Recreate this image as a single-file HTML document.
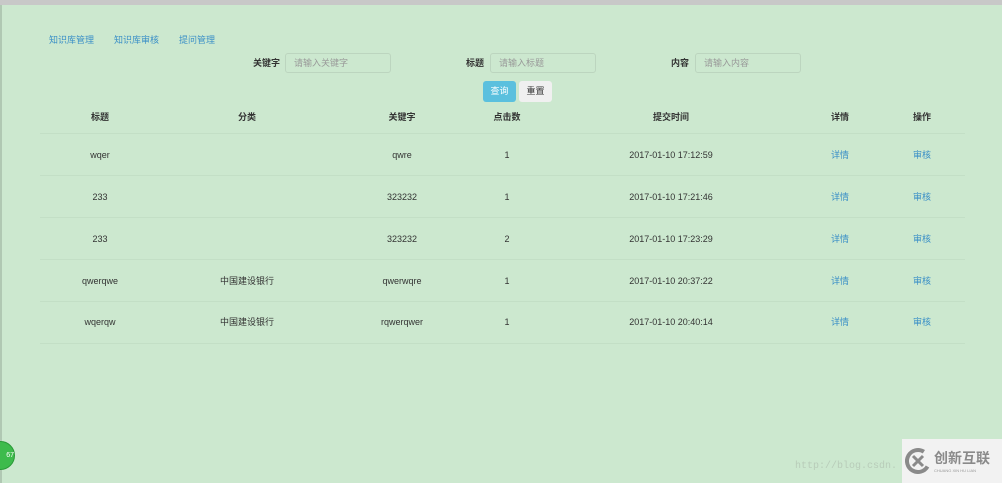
<!DOCTYPE html>
<html><head><meta charset="utf-8"><style>
body{margin:0;width:1002px;height:483px;background:#cce8cf;position:relative;overflow:hidden;font-family:"Liberation Sans","Noto Sans CJK SC",sans-serif;font-size:9px;color:#333;line-height:12px}
.a{position:absolute;white-space:nowrap}
.link{color:#3a8fc7}
.inp{position:absolute;height:20px;border:1px solid #bcd5bf;border-radius:3px;background:#cce8cf;color:#999;font-size:9px;line-height:18px;padding-left:8px;box-sizing:border-box}
.c{position:absolute;transform:translateX(-50%);white-space:nowrap;height:12px}
.line{position:absolute;left:40px;width:925px;height:1px;background:#c3dfc6}
</style></head><body>
<div class="a" style="left:0;top:0;width:1002px;height:5px;background:#c8c8c8"></div>
<div class="a" style="left:0;top:5px;width:2px;height:478px;background:#b0c8b3"></div>
<div class="a link" style="left:49px;top:34px">知识库管理</div>
<div class="a link" style="left:114px;top:34px">知识库审核</div>
<div class="a link" style="left:179px;top:34px">提问管理</div>
<div class="a" style="left:253px;top:57px;font-weight:bold">关键字</div>
<div class="inp" style="left:285px;top:53px;width:106px">请输入关键字</div>
<div class="a" style="left:466px;top:57px;font-weight:bold">标题</div>
<div class="inp" style="left:490px;top:53px;width:106px">请输入标题</div>
<div class="a" style="left:671px;top:57px;font-weight:bold">内容</div>
<div class="inp" style="left:695px;top:53px;width:106px">请输入内容</div>
<div class="a" style="left:483px;top:81px;width:33px;height:21px;background:#5bc0de;border-radius:3px;color:#fff;text-align:center;line-height:21px">查询</div>
<div class="a" style="left:519px;top:81px;width:33px;height:21px;background:#f0f0f0;border-radius:3px;color:#333;text-align:center;line-height:21px">重置</div>
<div style="font-weight:bold">
<div class="c" style="left:100px;top:111px">标题</div>
<div class="c" style="left:247px;top:111px">分类</div>
<div class="c" style="left:402px;top:111px">关键字</div>
<div class="c" style="left:507px;top:111px">点击数</div>
<div class="c" style="left:671px;top:111px">提交时间</div>
<div class="c" style="left:840px;top:111px">详情</div>
<div class="c" style="left:922px;top:111px">操作</div>
</div>
<div class="line" style="top:133px"></div>
<div class="line" style="top:175px"></div>
<div class="line" style="top:217px"></div>
<div class="line" style="top:259px"></div>
<div class="line" style="top:301px"></div>
<div class="line" style="top:343px"></div>

<div class="c" style="left:100px;top:149px">wqer</div><div class="c" style="left:402px;top:149px">qwre</div><div class="c" style="left:507px;top:149px">1</div><div class="c" style="left:671px;top:149px">2017-01-10 17:12:59</div><div class="c link" style="left:840px;top:149px">详情</div><div class="c link" style="left:922px;top:149px">审核</div>

<div class="c" style="left:100px;top:191px">233</div><div class="c" style="left:402px;top:191px">323232</div><div class="c" style="left:507px;top:191px">1</div><div class="c" style="left:671px;top:191px">2017-01-10 17:21:46</div><div class="c link" style="left:840px;top:191px">详情</div><div class="c link" style="left:922px;top:191px">审核</div>

<div class="c" style="left:100px;top:233px">233</div><div class="c" style="left:402px;top:233px">323232</div><div class="c" style="left:507px;top:233px">2</div><div class="c" style="left:671px;top:233px">2017-01-10 17:23:29</div><div class="c link" style="left:840px;top:233px">详情</div><div class="c link" style="left:922px;top:233px">审核</div>

<div class="c" style="left:100px;top:275px">qwerqwe</div><div class="c" style="left:247px;top:275px">中国建设银行</div><div class="c" style="left:402px;top:275px">qwerwqre</div><div class="c" style="left:507px;top:275px">1</div><div class="c" style="left:671px;top:275px">2017-01-10 20:37:22</div><div class="c link" style="left:840px;top:275px">详情</div><div class="c link" style="left:922px;top:275px">审核</div>

<div class="c" style="left:100px;top:316px">wqerqw</div><div class="c" style="left:247px;top:316px">中国建设银行</div><div class="c" style="left:402px;top:316px">rqwerqwer</div><div class="c" style="left:507px;top:316px">1</div><div class="c" style="left:671px;top:316px">2017-01-10 20:40:14</div><div class="c link" style="left:840px;top:316px">详情</div><div class="c link" style="left:922px;top:316px">审核</div>

<div class="a" style="left:-14px;top:441px;width:27px;height:27px;border-radius:50%;background:#3dbb4c;border:1px solid #2a9a38;color:#fff;font-size:7px;line-height:27px;text-align:right">67</div>
<div class="a" style="left:795px;top:461px;color:#b8ccb9;font-family:'Liberation Mono',monospace;font-size:10px">http://blog.csdn.</div>
<div class="a" style="left:902px;top:439px;width:100px;height:44px;background:#f2f2f2"></div>
<svg class="a" style="left:904px;top:447px" width="28" height="28" viewBox="0 0 28 28"><circle cx="14" cy="14" r="11" fill="none" stroke="#8a8a8a" stroke-width="4" stroke-dasharray="52 20" transform="rotate(30 14 14)"/><path d="M9 9 L19 19 M19 9 L9 19" stroke="#8a8a8a" stroke-width="3"/></svg>
<div class="a" style="left:934px;top:450px;color:#8a8a8a;font-size:14px;line-height:16px;font-weight:bold">创新互联</div>
<div class="a" style="left:934px;top:468px;color:#999;font-size:4px;line-height:5px">CHUANG XIN HU LIAN</div>
</body></html>
